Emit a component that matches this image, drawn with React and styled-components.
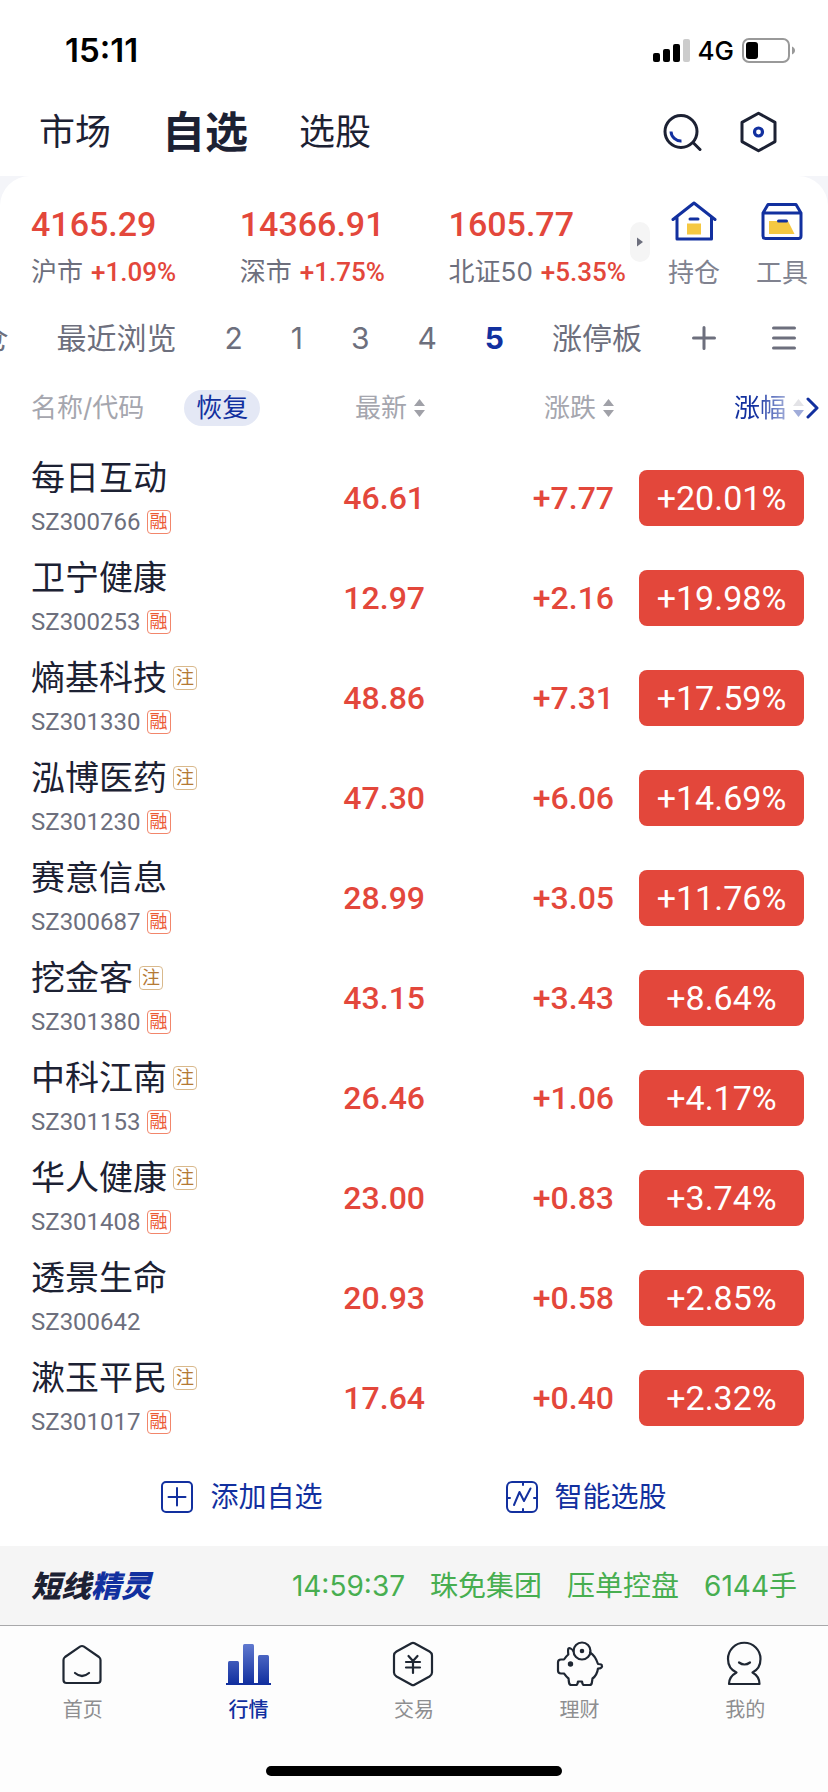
import React from 'react';
import styled, { createGlobalStyle } from 'styled-components';

const GlobalStyles = createGlobalStyle`
  * {
    box-sizing: border-box;
    margin: 0;
    padding: 0;
  }

  body {
    background: #fff;
    color: #1c2133;
    font-family: Inter, "Noto Sans CJK SC", sans-serif;
    -webkit-font-smoothing: antialiased;
  }

  button {
    background: none;
    border: none;
    color: inherit;
    font: inherit;
    cursor: pointer;
  }

  a {
    color: inherit;
    text-decoration: none;
  }

  svg {
    display: block;
    flex: none;
  }
`;

const numberFont = 'Roboto, "Noto Sans CJK SC", sans-serif';

const Layout = styled.div`
  min-height: 100vh;
  display: flex;
  flex-direction: column;
`;

const StatusBar = styled.div`
  height: 88px;
  padding: 12px 33px 0 65px;
  display: flex;
  align-items: center;
  justify-content: space-between;
  color: #000;
`;

const Clock = styled.span`
  font-size: 33px;
  font-weight: 600;
`;

const StatusIcons = styled.div`
  display: flex;
  align-items: center;
  gap: 8px;
  font-size: 26px;
  font-weight: 500;
`;

const Header = styled.header`
  height: 88px;
  padding: 0 51px 0 39px;
  display: flex;
  align-items: center;
  justify-content: space-between;
`;

const MainNav = styled.nav`
  display: flex;
  align-items: center;
  gap: 51px;
`;

const NavLink = styled.a`
  font-size: ${(props) => (props.$active ? '43px' : '36px')};
  font-weight: ${(props) => (props.$active ? 700 : 400)};
  line-height: 56px;
`;

const HeaderActions = styled.div`
  display: flex;
  align-items: center;
  gap: 38px;
`;

const Backdrop = styled.div`
  background: #f4f5f9;
`;

const Card = styled.main`
  background: #fff;
  border-radius: 30px 30px 0 0;
`;

const Summary = styled.section`
  height: 132px;
  padding: 0 20px 0 31px;
  display: flex;
  align-items: center;
`;

const IndexList = styled.div`
  flex: 1;
  padding-top: 10px;
  display: flex;
  justify-content: space-between;
`;

const IndexItem = styled.a`
  display: flex;
  flex-direction: column;
  gap: 6px;
`;

const IndexValue = styled.strong`
  color: #e3473b;
  font-family: ${numberFont};
  font-size: 34px;
  font-weight: 500;
  line-height: 44px;
`;

const IndexLabel = styled.span`
  color: #6d6f7d;
  font-size: 26px;
  line-height: 40px;
  display: flex;
  gap: 8px;
`;

const IndexChange = styled.span`
  color: #e3473b;
  font-family: ${numberFont};
  font-size: 26px;
  font-weight: 500;
`;

const ExpandButton = styled.button`
  width: 20px;
  height: 40px;
  margin: 0 18px 0 4px;
  border-radius: 10px;
  background: #f5f5f5;
  display: flex;
  align-items: center;
  justify-content: center;
`;

const Shortcuts = styled.div`
  padding-top: 10px;
  display: flex;
  gap: 36px;
`;

const Shortcut = styled.a`
  color: #80828f;
  font-size: 26px;
  line-height: 40px;
  display: flex;
  flex-direction: column;
  align-items: center;
  gap: 12px;
`;

const GroupBar = styled.div`
  height: 60px;
  padding-right: 32px;
  display: flex;
  align-items: center;
`;

const GroupList = styled.div`
  flex: 1;
  min-width: 0;
  overflow: hidden;
  display: flex;
  justify-content: flex-end;
  gap: 48px;
`;

const GroupTab = styled.button`
  flex: none;
  color: ${(props) => (props.$active ? '#12309f' : '#6d6f7d')};
  font-size: 30px;
  font-weight: ${(props) => (props.$active ? 700 : 400)};
  line-height: 44px;
`;

const GroupActions = styled.div`
  margin-left: 50px;
  display: flex;
  gap: 56px;
`;

const Quotes = styled.table`
  width: 100%;
  table-layout: fixed;
  border-collapse: collapse;
`;

const NameCol = styled.col``;

const DataCol = styled.col`
  width: ${(props) => props.$width}px;
`;

const HeadCell = styled.th`
  height: 80px;
  padding-left: ${(props) => (props.$first ? '31px' : 0)};
  padding-right: ${(props) => (props.$last ? '9px' : 0)};
  color: #a5a6ae;
  font-size: 26px;
  font-weight: 400;
  line-height: 36px;
`;

const HeadGroup = styled.div`
  display: flex;
  align-items: center;
  justify-content: ${(props) => (props.$left ? 'flex-start' : 'flex-end')};
  gap: ${(props) => (props.$left ? '40px' : '2px')};
`;

const RestoreButton = styled.button`
  width: 76px;
  height: 36px;
  border-radius: 18px;
  background: #e4e8f5;
  color: #12309f;
`;

const SortButton = styled.button`
  display: flex;
  align-items: center;
  gap: 7px;
  color: ${(props) => (props.$active ? '#12309f' : 'inherit')};
  mask-image: ${(props) =>
    props.$active ? 'linear-gradient(90deg, #000 30%, rgba(0, 0, 0, 0.4) 75%)' : 'none'};
`;

const Cell = styled.td`
  height: 100px;
  padding-left: ${(props) => (props.$first ? '31px' : 0)};
  padding-right: ${(props) => (props.$last ? '24px' : 0)};
  color: #e3473b;
  font-family: ${numberFont};
  font-size: 32px;
  font-weight: 500;
  text-align: right;
`;

const StockName = styled.div`
  color: #1c2133;
  font-size: 34px;
  font-weight: 400;
  line-height: 48px;
  display: flex;
  align-items: center;
  gap: 6px;
`;

const StockCode = styled.div`
  color: #6d6f7d;
  font-size: 24px;
  font-weight: 400;
  line-height: 40px;
  display: flex;
  align-items: center;
  gap: 6px;
`;

const Tag = styled.span`
  width: 24px;
  height: 24px;
  border: 1px solid ${(props) => (props.$gold ? '#d9b98c' : '#f2866b')};
  border-radius: 4px;
  color: ${(props) => (props.$gold ? '#b47a35' : '#ec5a35')};
  font-size: 18px;
  line-height: 22px;
  display: flex;
  align-items: center;
  justify-content: center;
`;

const ChangePill = styled.span`
  height: 56px;
  margin-left: 25px;
  border-radius: 8px;
  background: #e3473b;
  color: #fff;
  font-size: 34px;
  font-weight: 400;
  display: flex;
  align-items: center;
  justify-content: center;
`;

const ListActions = styled.div`
  height: 98px;
  display: flex;
  align-items: center;
  justify-content: center;
  gap: 183px;
`;

const ListAction = styled.button`
  color: #12309f;
  font-size: 28px;
  line-height: 40px;
  display: flex;
  align-items: center;
  gap: 17px;
`;

const Ticker = styled.a`
  height: 80px;
  padding: 0 31px;
  border-bottom: 1px solid #a8a8aa;
  background: #f5f5f5;
  display: flex;
  align-items: center;
  justify-content: space-between;
`;

const TickerTitle = styled.strong`
  font-size: 30px;
  font-style: italic;
  font-weight: 900;
  line-height: 40px;
`;

const Accent = styled.span`
  color: #12309f;
`;

const TickerText = styled.span`
  color: #47ae50;
  font-size: 28px;
  line-height: 40px;
  display: flex;
  gap: 25px;
`;

const TabBar = styled.nav`
  flex: 1;
  background: #fdfdfd;
  padding-top: 14px;
  display: grid;
  grid-template-columns: repeat(5, 1fr);
  align-content: start;
`;

const TabLink = styled.a`
  color: ${(props) => (props.$active ? '#12309f' : '#8e8e90')};
  font-size: 20px;
  font-weight: ${(props) => (props.$active ? 500 : 400)};
  line-height: 28px;
  display: flex;
  flex-direction: column;
  align-items: center;
  gap: 8px;
`;

const HomeIndicator = styled.div`
  background: #fdfdfd;
  padding-bottom: 16px;
  display: flex;
  justify-content: center;

  &::after {
    content: '';
    width: 296px;
    height: 10px;
    border-radius: 5px;
    background: #000;
  }
`;

const indexes = [
  { value: '4165.29', name: '沪市', change: '+1.09%' },
  { value: '14366.91', name: '深市', change: '+1.75%' },
  { value: '1605.77', name: '北证50', change: '+5.35%' },
];

const groups = ['持仓', '最近浏览', '2', '1', '3', '4', '5', '涨停板'];

const stocks = [
  { name: '每日互动', code: 'SZ300766', margin: true, price: '46.61', diff: '+7.77', pct: '+20.01%' },
  { name: '卫宁健康', code: 'SZ300253', margin: true, price: '12.97', diff: '+2.16', pct: '+19.98%' },
  { name: '熵基科技', code: 'SZ301330', margin: true, reg: true, price: '48.86', diff: '+7.31', pct: '+17.59%' },
  { name: '泓博医药', code: 'SZ301230', margin: true, reg: true, price: '47.30', diff: '+6.06', pct: '+14.69%' },
  { name: '赛意信息', code: 'SZ300687', margin: true, price: '28.99', diff: '+3.05', pct: '+11.76%' },
  { name: '挖金客', code: 'SZ301380', margin: true, reg: true, price: '43.15', diff: '+3.43', pct: '+8.64%' },
  { name: '中科江南', code: 'SZ301153', margin: true, reg: true, price: '26.46', diff: '+1.06', pct: '+4.17%' },
  { name: '华人健康', code: 'SZ301408', margin: true, reg: true, price: '23.00', diff: '+0.83', pct: '+3.74%' },
  { name: '透景生命', code: 'SZ300642', price: '20.93', diff: '+0.58', pct: '+2.85%' },
  { name: '漱玉平民', code: 'SZ301017', margin: true, reg: true, price: '17.64', diff: '+0.40', pct: '+2.32%' },
];

const SignalIcon = () => (
  <svg width="37" height="23" viewBox="0 0 37 23">
    <rect x="0" y="14" width="7" height="9" rx="2" />
    <rect x="10" y="10" width="7" height="13" rx="2" />
    <rect x="20" y="5" width="7" height="18" rx="2" />
    <rect x="30" y="0" width="7" height="23" rx="2" fill="#ccc" />
  </svg>
);

const BatteryIcon = () => (
  <svg width="53" height="25" viewBox="0 0 53 25">
    <rect x="1" y="1" width="46" height="23" rx="6" fill="none" stroke="#999" strokeWidth="2" />
    <rect x="4" y="4" width="12" height="17" rx="3" />
    <path d="M50 8.500c4 1.500 4 6.500 0 8z" fill="#999" />
  </svg>
);

const SearchIcon = () => (
  <svg width="39" height="42" viewBox="0 0 39 42" fill="none" strokeLinecap="round">
    <circle cx="18" cy="20.500" r="16" stroke="#1c2133" strokeWidth="3" />
    <path d="M30.500 32l6.500 6.500" stroke="#1c2133" strokeWidth="3" />
    <path d="M8 20.500a10 10 0 0 0 10.500 9.500" stroke="#12309f" strokeWidth="3" strokeLinecap="butt" />
  </svg>
);

const SettingsIcon = () => (
  <svg width="37" height="42" viewBox="0 0 37 42" fill="none" strokeLinejoin="round">
    <path d="M18.500 2.200L35 11.400v19.200l-16.500 9.200L2 30.600V11.400z" stroke="#1c2133" strokeWidth="3" />
    <circle cx="18.500" cy="21" r="4" stroke="#12309f" strokeWidth="3.200" />
  </svg>
);

const HouseIcon = () => (
  <svg width="46" height="40" viewBox="0 0 46 40" fill="none" stroke="#12309f" strokeWidth="3" strokeLinecap="round" strokeLinejoin="round">
    <path d="M2 18.500L23 2l21 16.500M6 16v22h34.500V16" />
    <path d="M19 18h8" />
    <rect x="16" y="22.500" width="14" height="11" fill="#f5c842" stroke="none" />
  </svg>
);

const ToolboxIcon = () => (
  <svg width="42" height="40" viewBox="0 0 42 40" fill="none" stroke="#12309f" strokeWidth="3" strokeLinecap="round" strokeLinejoin="round">
    <path d="M8 20h19l6.500 13H8z" fill="#f5c842" stroke="none" />
    <path d="M2 12h38v23a2.500 2.500 0 0 1-2.500 2.500h-33A2.500 2.500 0 0 1 2 35zL7 3.500h28L40 12" />
    <path d="M17.500 20h8" />
  </svg>
);

const PlusIcon = () => (
  <svg width="24" height="24" viewBox="0 0 24 24" stroke="#6d6f7d" strokeWidth="3" strokeLinecap="round">
    <path d="M1.500 12h21M12 1.500v21" />
  </svg>
);

const MenuIcon = () => (
  <svg width="24" height="24" viewBox="0 0 24 24" stroke="#6d6f7d" strokeWidth="3" strokeLinecap="round">
    <path d="M1.500 2h21M1.500 12h21M1.500 22h21" />
  </svg>
);

const SortIcon = ({ active }) => (
  <svg width="11" height="18" viewBox="0 0 11 18">
    <path d="M5.500 0L11 7H0z" fill={active ? '#b9bac2' : '#a0a1a8'} />
    <path d="M0 11h11l-5.500 7z" fill={active ? '#12309f' : '#a0a1a8'} />
  </svg>
);

const ChevronIcon = () => (
  <svg width="13" height="22" viewBox="0 0 13 22" fill="none" stroke="#12309f" strokeWidth="3" strokeLinecap="round" strokeLinejoin="round">
    <path d="M2 2l9 9-9 9" />
  </svg>
);

const AddIcon = () => (
  <svg width="32" height="32" viewBox="0 0 32 32" fill="none" stroke="#12309f" strokeWidth="2" strokeLinecap="round">
    <rect x="1" y="1" width="30" height="30" rx="4" />
    <path d="M7.500 16h17M16 7v17.500" />
  </svg>
);

const SmartIcon = () => (
  <svg width="32" height="32" viewBox="0 0 32 32" fill="none" stroke="#12309f" strokeWidth="2" strokeLinecap="round" strokeLinejoin="round">
    <rect x="1" y="1" width="30" height="30" rx="5" />
    <path d="M17 1v3M17 28v3M1 17h3M28 17h3" />
    <path d="M8 24l5.500-13L18 20l6.500-12.500" />
  </svg>
);

const HomeTabIcon = () => (
  <svg width="46" height="48" viewBox="0 0 46 48" fill="none" stroke="#1f2733" strokeWidth="2.200" strokeLinecap="round" strokeLinejoin="round">
    <path d="M20 6.700L5 17q-1.500 1.200-1.500 3v20a3 3 0 0 0 3 3h31a3 3 0 0 0 3-3V20q0-1.800-1.500-3L24 6.700q-2-1.400-4 0z" />
    <path d="M15 33q7 6 14 0" />
  </svg>
);

const MarketTabIcon = () => (
  <svg width="46" height="48" viewBox="0 0 46 48">
    <defs>
      <linearGradient id="bars" x1="0" y1="4" x2="0" y2="44" gradientUnits="userSpaceOnUse">
        <stop offset="0" stopColor="#6079cf" />
        <stop offset="1" stopColor="#12309f" />
      </linearGradient>
    </defs>
    <g fill="url(#bars)">
      <rect x="3" y="21" width="11" height="24" rx="1.500" />
      <rect x="18" y="4" width="11" height="41" rx="1.500" />
      <rect x="33" y="15" width="11" height="30" rx="1.500" />
    </g>
    <rect x="1" y="43" width="45" height="2" fill="#12309f" />
  </svg>
);

const TradeTabIcon = () => (
  <svg width="46" height="48" viewBox="0 0 46 48" fill="none" stroke="#1f2733" strokeWidth="2.200" strokeLinecap="round" strokeLinejoin="round">
    <path d="M20.500 3.200L5.500 11.500Q3 13 3 15.500v17q0 2.500 2.500 4l15 8.300q1.500.8 3 0l15-8.300q2.500-1.500 2.500-4v-17q0-2.500-2.500-4l-15-8.300q-1.500-.8-3 0z" />
    <path d="M17.500 16l4.500 5 4.500-5M22 21v12M15 22h14M15 27.500h14" />
  </svg>
);

const WealthTabIcon = () => (
  <svg width="48" height="48" viewBox="0 0 48 48" fill="none" stroke="#1f2733" strokeWidth="2.200" strokeLinecap="round" strokeLinejoin="round">
    <path d="M17.500 11c-1.500-2-4-3.500-5-2.500-.8 1-.4 4-.2 6C10.500 16 9 18 8 19.500H5a3 3 0 0 0-3 3v8a3 3 0 0 0 3 3h3c1.500 2 2.500 3.500 4.500 5l.5 4q.3 2.500 2.500 2.500h4.500q1.500 0 2-3.500h4q.5 3.500 2 3.500h5.500q2 0 2.300-2l.7-4.500c3.500-2.500 5-6.500 5.500-10 3 0 4.500-1.500 4-3-.3-1.300-2-1.500-4-1.500-1.500-4.500-4.500-9.500-8-11.500" />
    <circle cx="26" cy="11" r="8.500" />
    <circle cx="26" cy="11" r="1.200" fill="#1f2733" />
    <circle cx="14.500" cy="24" r="1.600" fill="#1f2733" />
  </svg>
);

const ProfileTabIcon = () => (
  <svg width="46" height="48" viewBox="0 0 46 48" fill="none" stroke="#1f2733" strokeWidth="2.200" strokeLinecap="round" strokeLinejoin="round">
    <path d="M14.500 32.500C8 29.500 6 24 6 19a16 16 0 0 1 32.500 0C38.500 24 36.500 29.500 30.500 32.500c4.500 2.500 7 6 7 11.500H7c0-5.500 3-9 7.500-11.500z" />
    <path d="M17 22.500q5.500 4 11 0" />
  </svg>
);

const tabs = [
  { label: '首页', Icon: HomeTabIcon },
  { label: '行情', Icon: MarketTabIcon, active: true },
  { label: '交易', Icon: TradeTabIcon },
  { label: '理财', Icon: WealthTabIcon },
  { label: '我的', Icon: ProfileTabIcon },
];

function App() {
  return (
    <Layout>
      <GlobalStyles />
      <StatusBar>
        <Clock>15:11</Clock>
        <StatusIcons>
          <SignalIcon />
          4G
          <BatteryIcon />
        </StatusIcons>
      </StatusBar>
      <Header>
        <MainNav>
          <NavLink href="#market">市场</NavLink>
          <NavLink href="#watchlist" $active>自选</NavLink>
          <NavLink href="#screener">选股</NavLink>
        </MainNav>
        <HeaderActions>
          <button type="button" aria-label="搜索"><SearchIcon /></button>
          <button type="button" aria-label="设置"><SettingsIcon /></button>
        </HeaderActions>
      </Header>
      <Backdrop>
        <Card>
          <Summary>
            <IndexList>
              {indexes.map((item) => (
                <IndexItem key={item.name} href="#index">
                  <IndexValue>{item.value}</IndexValue>
                  <IndexLabel>
                    {item.name}
                    <IndexChange>{item.change}</IndexChange>
                  </IndexLabel>
                </IndexItem>
              ))}
            </IndexList>
            <ExpandButton type="button" aria-label="展开">
              <svg width="6" height="10" viewBox="0 0 6 10">
                <path d="M0 0.500L6 5 0 9.500z" fill="#6d6f7d" />
              </svg>
            </ExpandButton>
            <Shortcuts>
              <Shortcut href="#positions"><HouseIcon />持仓</Shortcut>
              <Shortcut href="#tools"><ToolboxIcon />工具</Shortcut>
            </Shortcuts>
          </Summary>
          <GroupBar>
            <GroupList>
              {groups.map((group) => (
                <GroupTab key={group} type="button" $active={group === '5'}>{group}</GroupTab>
              ))}
            </GroupList>
            <GroupActions>
              <button type="button" aria-label="添加分组"><PlusIcon /></button>
              <button type="button" aria-label="分组管理"><MenuIcon /></button>
            </GroupActions>
          </GroupBar>
          <Quotes>
            <colgroup>
              <NameCol />
              <DataCol $width={150} />
              <DataCol $width={189} />
              <DataCol $width={214} />
            </colgroup>
            <thead>
              <tr>
                <HeadCell $first>
                  <HeadGroup $left>
                    名称/代码
                    <RestoreButton type="button">恢复</RestoreButton>
                  </HeadGroup>
                </HeadCell>
                <HeadCell>
                  <HeadGroup>
                    <SortButton type="button">最新<SortIcon /></SortButton>
                  </HeadGroup>
                </HeadCell>
                <HeadCell>
                  <HeadGroup>
                    <SortButton type="button">涨跌<SortIcon /></SortButton>
                  </HeadGroup>
                </HeadCell>
                <HeadCell $last>
                  <HeadGroup>
                    <SortButton type="button" $active>涨幅<SortIcon active /></SortButton>
                    <ChevronIcon />
                  </HeadGroup>
                </HeadCell>
              </tr>
            </thead>
            <tbody>
              {stocks.map((stock) => (
                <tr key={stock.code}>
                  <Cell $first>
                    <StockName>
                      {stock.name}
                      {stock.reg && <Tag $gold>注</Tag>}
                    </StockName>
                    <StockCode>
                      {stock.code}
                      {stock.margin && <Tag>融</Tag>}
                    </StockCode>
                  </Cell>
                  <Cell>{stock.price}</Cell>
                  <Cell>{stock.diff}</Cell>
                  <Cell $last>
                    <ChangePill>{stock.pct}</ChangePill>
                  </Cell>
                </tr>
              ))}
            </tbody>
          </Quotes>
          <ListActions>
            <ListAction type="button"><AddIcon />添加自选</ListAction>
            <ListAction type="button"><SmartIcon />智能选股</ListAction>
          </ListActions>
        </Card>
      </Backdrop>
      <Ticker href="#ticker">
        <TickerTitle>短线<Accent>精灵</Accent></TickerTitle>
        <TickerText>
          <span>14:59:37</span>
          <span>珠免集团</span>
          <span>压单控盘</span>
          <span>6144手</span>
        </TickerText>
      </Ticker>
      <TabBar>
        {tabs.map(({ label, Icon, active }) => (
          <TabLink key={label} href="#tab" $active={active}>
            <Icon />
            {label}
          </TabLink>
        ))}
      </TabBar>
      <HomeIndicator />
    </Layout>
  );
}

export default App;
